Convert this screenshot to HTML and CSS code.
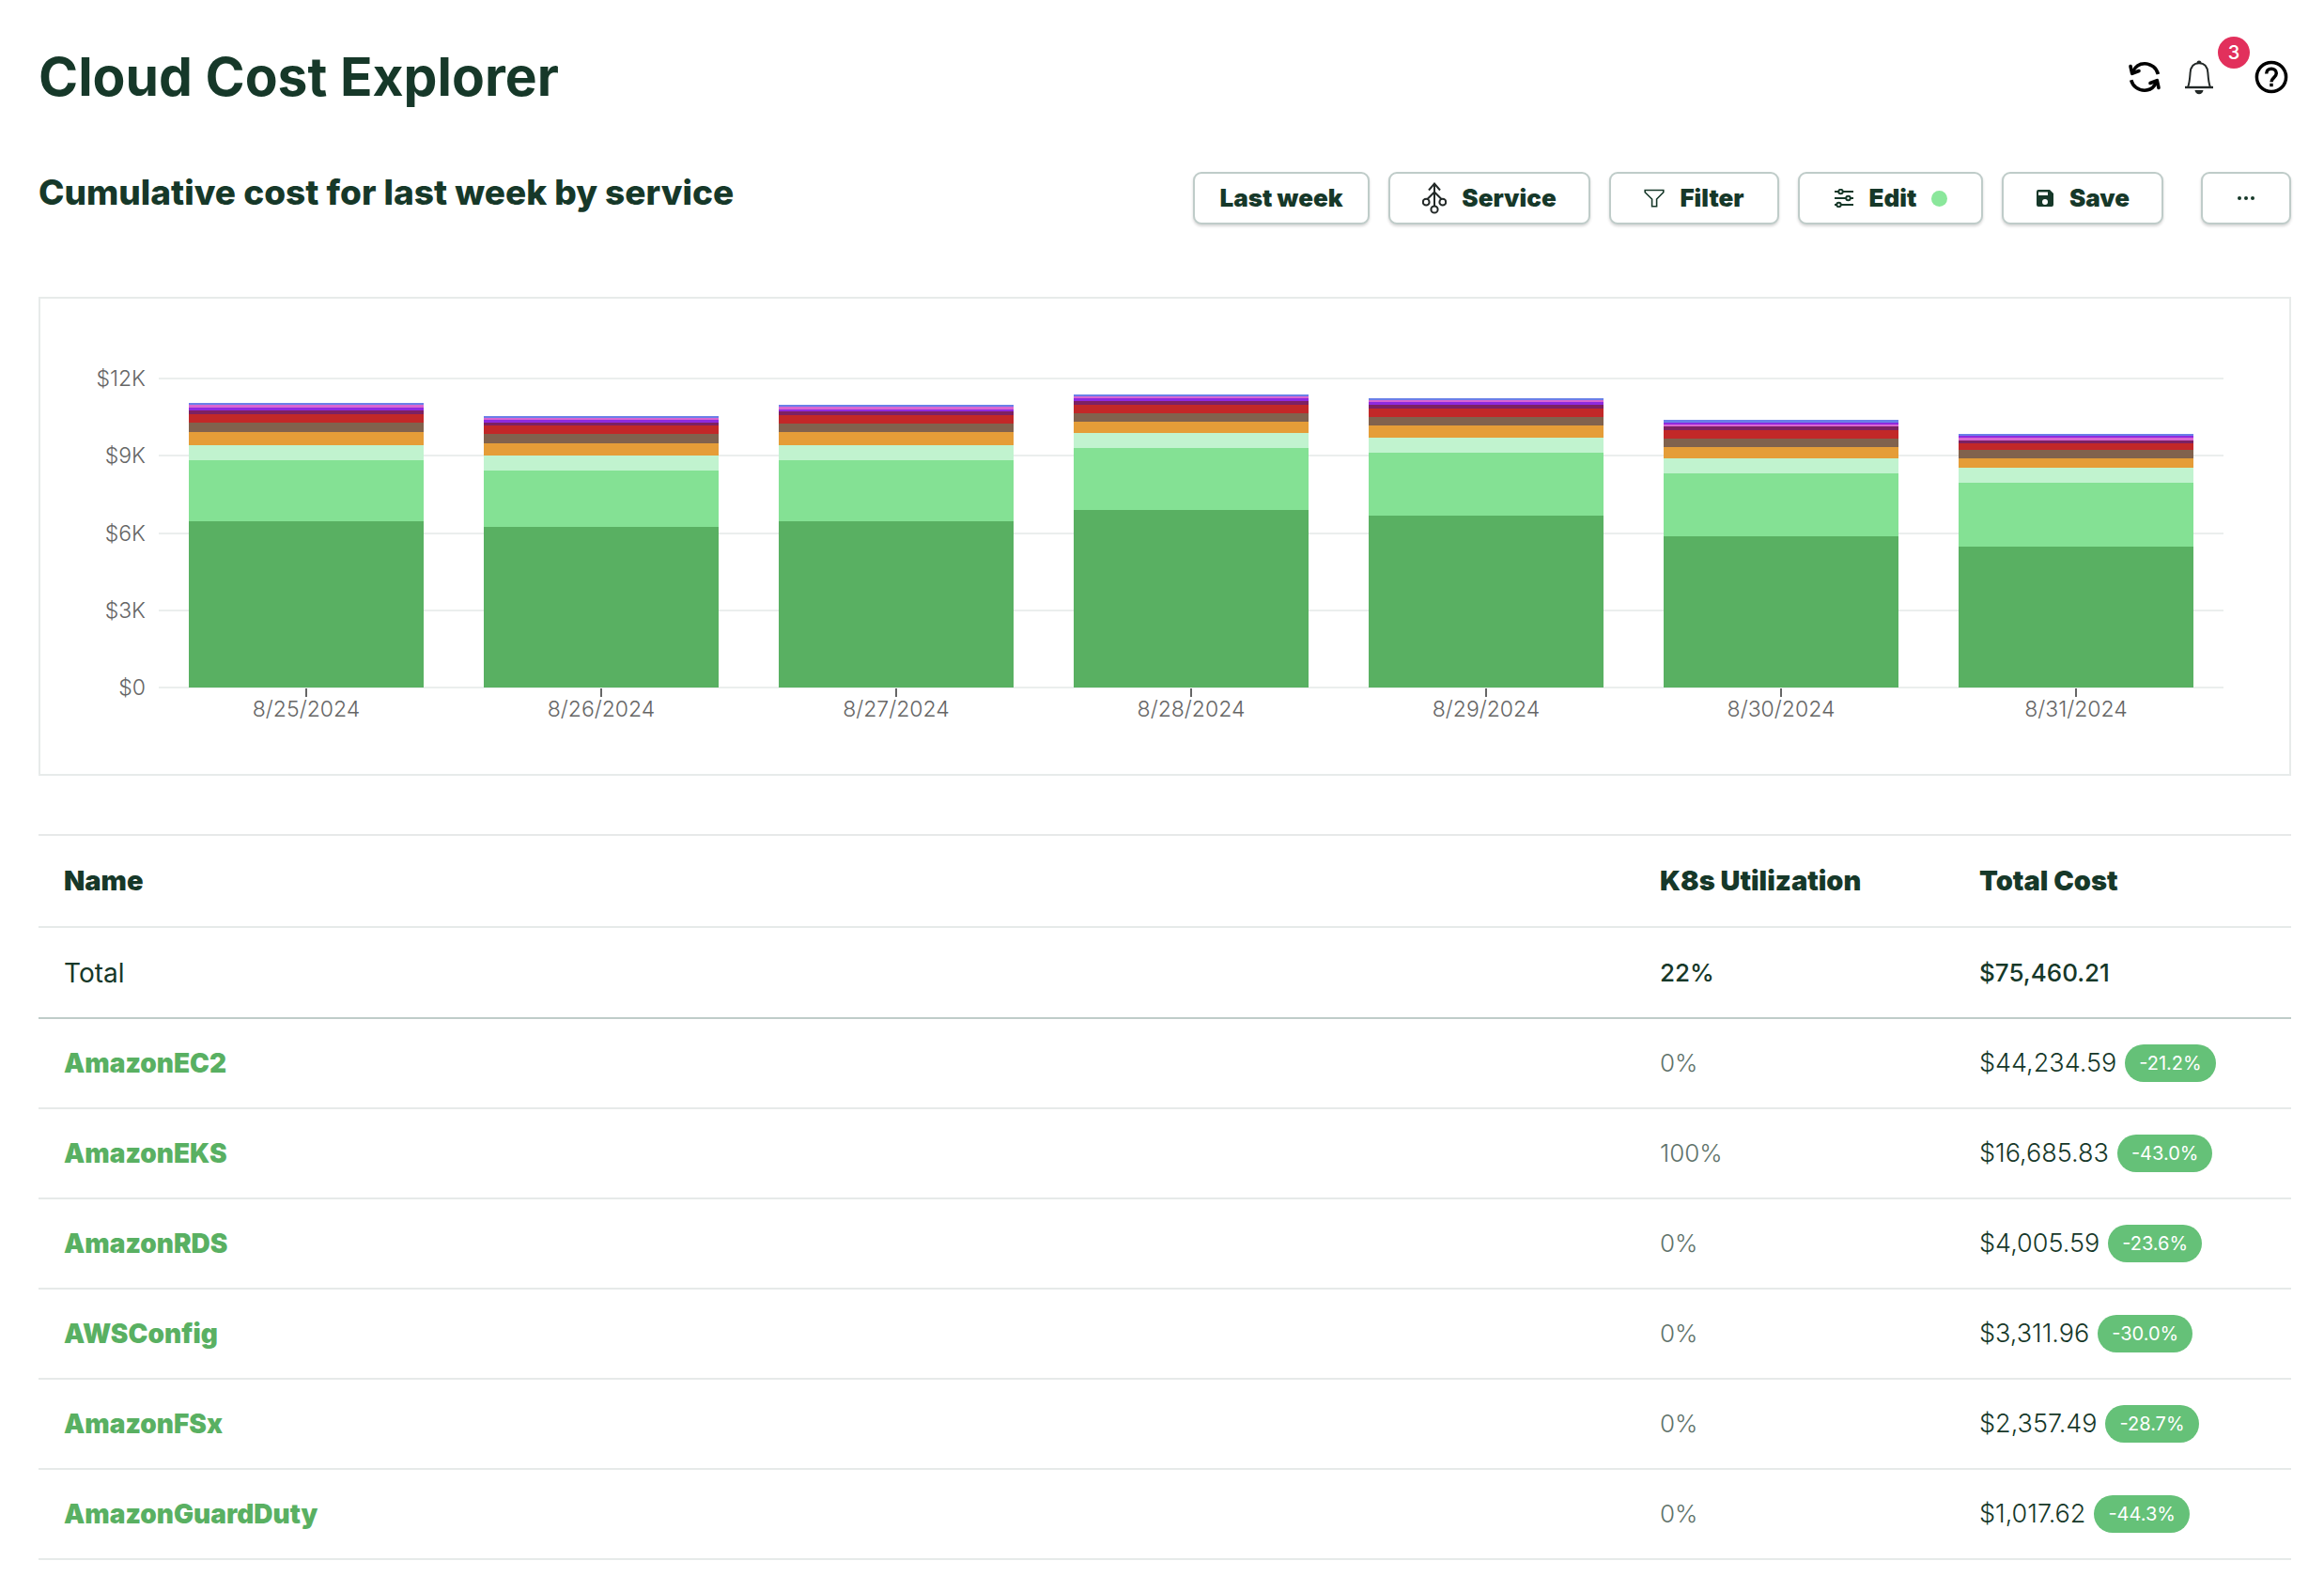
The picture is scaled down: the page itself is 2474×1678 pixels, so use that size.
FILE: index.html
```html
<!DOCTYPE html>
<html lang="en">
<head>
<meta charset="utf-8">
<meta name="viewport" content="width=device-width, initial-scale=1">
<title>Cloud Cost Explorer</title>
<link rel="stylesheet" href="styles.css">
</head>
<body>
<main class="page">
  <header class="page-header">
    <h1 class="page-title">Cloud Cost Explorer</h1>
    <div class="header-actions">
      <button class="icon-button" type="button" aria-label="Refresh">
        <svg width="36" height="36" viewBox="0 0 36 36" fill="none" stroke="#000" stroke-width="3.6" stroke-linecap="butt" stroke-linejoin="round">
          <path d="M5.500 12.500C8 6.800 12.500 3.800 18 3.800c7.200 0 12.800 4.600 14.400 11.200"/>
          <path d="M3 6.500l1.700 7.800 7.300-2.800" stroke-linecap="round"/>
          <path d="M30.500 23.500C28 29.200 23.500 32.200 18 32.200c-7 0-12.600-4.500-14.300-11"/>
          <path d="M33 29.500l-1.700-7.800-7.300 2.800" stroke-linecap="round"/>
        </svg>
      </button>
      <button class="icon-button bell" type="button" aria-label="Notifications">
        <svg width="32" height="38" viewBox="0 0 32 38" fill="none" stroke="#222827" stroke-width="2">
          <path d="M4.200 29.500C6 24.500 6.200 20 6.600 14.500 7.100 8 10.500 4.200 16 4.200s8.900 3.800 9.400 10.300c.4 5.500.6 10 2.400 15"/>
          <path d="M1 30h30" stroke-width="2.400"/>
          <path d="M13.500 4a2.500 2.500 0 0 1 5 0z" fill="#222827" stroke="none"/>
          <path d="M11.500 33h9c-.3 2.700-2 4.200-4.500 4.200s-4.200-1.500-4.500-4.200z" fill="#222827" stroke="none"/>
        </svg>
        <span class="bell-count">3</span>
      </button>
      <button class="icon-button" type="button" aria-label="Help">
        <svg width="36" height="36" viewBox="0 0 36 36" fill="none" stroke="#000" stroke-width="3.500">
          <circle cx="18" cy="18" r="15.600"/>
          <path d="M12.700 14.400c0-3.200 2.300-5.200 5.300-5.200s5.300 2 5.300 4.900c0 4.400-5.300 4.600-5.300 9.200"/>
          <path d="M18 24.800v3.400"/>
        </svg>
      </button>
    </div>
  </header>

  <section class="toolbar">
    <h2 class="report-title">Cumulative cost for last week by service</h2>
    <div class="toolbar-buttons">
      <button class="button button-range" type="button">Last week</button>
      <button class="button button-service" type="button">
        <svg width="26" height="34" viewBox="0 0 26 34" fill="none" stroke="#222827" stroke-width="2">
          <path d="M13 1.500V25M7 8.500l6-7 6 7M5.500 18l7.500-7.500 7.500 7.500"/>
          <circle cx="4.200" cy="21.200" r="3.400"/><circle cx="21.800" cy="21.200" r="3.400"/><circle cx="13" cy="29" r="3.600"/>
        </svg>
        Service
      </button>
      <button class="button button-filter" type="button">
        <svg width="22" height="20" viewBox="0 0 22 20" fill="none" stroke="#163829" stroke-width="1.600">
          <path d="M1.200 1.500h19.600v2.200L13.600 11v7.700H8.600V11L1.200 3.700z"/>
        </svg>
        Filter
      </button>
      <button class="button button-edit" type="button">
        <svg width="22" height="20" viewBox="0 0 22 20" fill="none" stroke="#163829" stroke-width="2">
          <path d="M1 3h4M10 3h11M1 10h12M18 10h3M1 17h2M8 17h13"/>
          <circle cx="7.500" cy="3" r="2.200"/><circle cx="15.500" cy="10" r="2.200"/><circle cx="5.500" cy="17" r="2.200"/>
        </svg>
        Edit
        <span class="status-dot"></span>
      </button>
      <button class="button button-save" type="button">
        <svg width="20" height="20" viewBox="0 0 20 20">
          <path fill="#163829" fill-rule="evenodd" d="M3 1h12l4 4v12a2 2 0 0 1-2 2H3a2 2 0 0 1-2-2V3a2 2 0 0 1 2-2zm0 2.500V7h10V3.500zM10 11a3 3 0 1 0 0 6 3 3 0 0 0 0-6z"/>
        </svg>
        Save
      </button>
      <button class="button button-more" type="button" aria-label="More actions">
        <svg width="20" height="6" viewBox="0 0 20 6" fill="#163829"><circle cx="3" cy="3" r="2"/><circle cx="10" cy="3" r="2"/><circle cx="17" cy="3" r="2"/></svg>
      </button>
    </div>
  </section>

  <section class="chart" aria-label="Daily cost by service">
    <div class="y-axis"><span>$12K</span><span>$9K</span><span>$6K</span><span>$3K</span><span>$0</span></div>
    <div class="plot">
      <div class="gridlines"><i></i><i></i><i></i><i></i><i></i></div>
      <div class="bars">
        <div class="bar"><i class="s10" style="height:2px"></i><i class="s9" style="height:3px"></i><i class="s8" style="height:3px"></i><i class="s7" style="height:4px"></i><i class="s6" style="height:9px"></i><i class="s5" style="height:10px"></i><i class="s4" style="height:14px"></i><i class="s3" style="height:16px"></i><i class="s2" style="height:65px"></i><i class="s1" style="height:177px"></i></div>
        <div class="bar"><i class="s10" style="height:2px"></i><i class="s9" style="height:2px"></i><i class="s8" style="height:3px"></i><i class="s7" style="height:3px"></i><i class="s6" style="height:9px"></i><i class="s5" style="height:10px"></i><i class="s4" style="height:13px"></i><i class="s3" style="height:16px"></i><i class="s2" style="height:60px"></i><i class="s1" style="height:171px"></i></div>
        <div class="bar"><i class="s10" style="height:2px"></i><i class="s9" style="height:3px"></i><i class="s8" style="height:2px"></i><i class="s7" style="height:4px"></i><i class="s6" style="height:9px"></i><i class="s5" style="height:9px"></i><i class="s4" style="height:14px"></i><i class="s3" style="height:16px"></i><i class="s2" style="height:65px"></i><i class="s1" style="height:177px"></i></div>
        <div class="bar"><i class="s10" style="height:2px"></i><i class="s9" style="height:2px"></i><i class="s8" style="height:3px"></i><i class="s7" style="height:4px"></i><i class="s6" style="height:9px"></i><i class="s5" style="height:9px"></i><i class="s4" style="height:12px"></i><i class="s3" style="height:16px"></i><i class="s2" style="height:66px"></i><i class="s1" style="height:189px"></i></div>
        <div class="bar"><i class="s10" style="height:2px"></i><i class="s9" style="height:2px"></i><i class="s8" style="height:3px"></i><i class="s7" style="height:4px"></i><i class="s6" style="height:9px"></i><i class="s5" style="height:9px"></i><i class="s4" style="height:13px"></i><i class="s3" style="height:16px"></i><i class="s2" style="height:67px"></i><i class="s1" style="height:183px"></i></div>
        <div class="bar"><i class="s10" style="height:3px"></i><i class="s8" style="height:2px"></i><i class="s9" style="height:2px"></i><i class="s7" style="height:4px"></i><i class="s6" style="height:9px"></i><i class="s5" style="height:9px"></i><i class="s4" style="height:12px"></i><i class="s3" style="height:16px"></i><i class="s2" style="height:67px"></i><i class="s1" style="height:161px"></i></div>
        <div class="bar"><i class="s10" style="height:2px"></i><i class="s8" style="height:2px"></i><i class="s9" style="height:3px"></i><i class="s7" style="height:3px"></i><i class="s6" style="height:7px"></i><i class="s5" style="height:9px"></i><i class="s4" style="height:10px"></i><i class="s3" style="height:16px"></i><i class="s2" style="height:68px"></i><i class="s1" style="height:150px"></i></div>
      </div>
    </div>
    <div class="x-axis"><span>8/25/2024</span><span>8/26/2024</span><span>8/27/2024</span><span>8/28/2024</span><span>8/29/2024</span><span>8/30/2024</span><span>8/31/2024</span></div>
  </section>

  <table class="costs">
    <colgroup><col><col class="col-util"><col class="col-cost"></colgroup>
    <thead>
      <tr><th scope="col">Name</th><th scope="col">K8s Utilization</th><th scope="col">Total Cost</th></tr>
    </thead>
    <tbody>
      <tr class="total"><td class="label">Total</td><td>22%</td><td>$75,460.21</td></tr>
      <tr><td><a href="#ec2">AmazonEC2</a></td><td class="util">0%</td><td><div class="cost">$44,234.59<span class="change">-21.2%</span></div></td></tr>
      <tr><td><a href="#eks">AmazonEKS</a></td><td class="util">100%</td><td><div class="cost">$16,685.83<span class="change">-43.0%</span></div></td></tr>
      <tr><td><a href="#rds">AmazonRDS</a></td><td class="util">0%</td><td><div class="cost">$4,005.59<span class="change">-23.6%</span></div></td></tr>
      <tr><td><a href="#config">AWSConfig</a></td><td class="util">0%</td><td><div class="cost">$3,311.96<span class="change">-30.0%</span></div></td></tr>
      <tr><td><a href="#fsx">AmazonFSx</a></td><td class="util">0%</td><td><div class="cost">$2,357.49<span class="change">-28.7%</span></div></td></tr>
      <tr><td><a href="#guardduty">AmazonGuardDuty</a></td><td class="util">0%</td><td><div class="cost">$1,017.62<span class="change">-44.3%</span></div></td></tr>
    </tbody>
  </table>
</main>
</body>
</html>
```
FILE: styles.css
```css
* {
  box-sizing: border-box;
}

body {
  margin: 0;
  background: #fff;
  color: #163829;
  font-family: Inter, "Liberation Sans", sans-serif;
  font-size: 26px;
}

.page {
  padding: 40px 35px 16px 41px;
}

.page-header {
  display: flex;
  justify-content: space-between;
  align-items: center;
  height: 84px;
}

.page-title {
  margin: 0;
  font-size: 57px;
  font-weight: 700;
  line-height: 84px;
}

.header-actions {
  display: flex;
  align-items: center;
  gap: 24px;
  padding-right: 3px;
}

.icon-button {
  position: relative;
  display: flex;
  padding: 0;
  border: 0;
  background: none;
}

.bell {
  margin-right: 19px;
}

.bell-count {
  position: absolute;
  left: 36px;
  bottom: 28px;
  width: 34px;
  height: 34px;
  border-radius: 50%;
  background: #e2305c;
  color: #fff;
  font: 500 20px/34px Inter, sans-serif;
  text-align: center;
}

/* Report title and actions */

.toolbar {
  display: flex;
  justify-content: space-between;
  align-items: flex-start;
  margin-top: 59px;
}

.report-title {
  margin: 0;
  font-size: 37px;
  font-weight: 800;
  line-height: 44px;
}

.toolbar-buttons {
  display: flex;
  gap: 20px;
}

.button {
  display: flex;
  align-items: center;
  justify-content: center;
  gap: 16px;
  height: 56px;
  padding: 0;
  border: 2px solid #bfccc9;
  border-radius: 9px;
  background: #fff;
  box-shadow: 0 2px 3px rgba(0, 0, 0, 0.16);
  color: #163829;
  font: 900 26px/32px Inter, sans-serif;
}

.button-range { width: 188px; }
.button-service { width: 215px; }
.button-filter { width: 181px; }
.button-edit { width: 197px; }
.button-save { width: 172px; }
.button-more { width: 96px; margin-left: 20px; }

.status-dot {
  width: 17px;
  height: 17px;
  border-radius: 50%;
  background: #8ae79b;
}

/* Stacked bar chart */

.chart {
  display: grid;
  grid-template-columns: 52px 1fr;
  column-gap: 14px;
  margin-top: 77px;
  padding: 84px 70px 55px 60px;
  border: 2px solid #e7ebea;
  color: #666;
  font-size: 23px;
  font-weight: 300;
}

.y-axis {
  display: flex;
  flex-direction: column;
  justify-content: space-between;
  align-items: flex-end;
  margin: -14px 0;
  line-height: 30px;
}

.plot {
  display: grid;
  height: 331px;
}

.gridlines,
.bars {
  grid-area: 1 / 1;
}

.gridlines {
  display: flex;
  flex-direction: column;
  justify-content: space-between;
}

.gridlines i {
  height: 2px;
  background: #ebeeed;
}

.bars,
.x-axis {
  display: grid;
  grid-template-columns: repeat(7, 1fr);
}

.bars {
  align-items: end;
  padding-bottom: 1px;
}

.bar {
  margin: 0 32px;
}

.bar i {
  display: block;
}

.s1 { background: #59b062; }
.s2 { background: #84e194; }
.s3 { background: #c1f3cf; }
.s4 { background: #e59d38; }
.s5 { background: #81624d; }
.s6 { background: #c22828; }
.s7 { background: #7c2163; }
.s8 { background: #8f2adf; }
.s9 { background: #d966d0; }
.s10 { background: #6a7fe8; }

.x-axis {
  grid-column: 2;
  text-align: center;
  line-height: 27px;
}

.x-axis span::before {
  content: "";
  display: block;
  width: 2px;
  height: 9px;
  margin: 0 auto;
  background: #666;
}

/* Cost table */

.costs {
  width: 100%;
  margin-top: 62px;
  border-collapse: separate;
  border-spacing: 0;
  border-top: 2px solid #e7e9e9;
  table-layout: fixed;
}

.col-util { width: 340px; }
.col-cost { width: 359px; }

.costs th,
.costs td {
  height: 96px;
  padding: 0 27px;
  border-bottom: 2px solid #e6eae9;
  line-height: 40px;
  text-align: left;
  white-space: nowrap;
}

.costs th {
  height: 98px;
  font-size: 29px;
  font-weight: 900;
}

.costs .total td {
  height: 97px;
  border-bottom-color: #bfccc9;
  font-weight: 500;
}

.costs .total .label {
  font-size: 28px;
  font-weight: 400;
}

.costs a {
  color: #59b062;
  font-size: 28px;
  font-weight: 900;
  text-decoration: none;
}

.costs .util {
  color: #5f736b;
  font-weight: 300;
}

.cost {
  display: flex;
  align-items: center;
  gap: 9px;
  font-size: 27px;
  font-weight: 300;
}

.change {
  padding: 0 15px;
  border-radius: 20px;
  background: #65c178;
  color: #fff;
  font-size: 20px;
  font-weight: 400;
}
```
